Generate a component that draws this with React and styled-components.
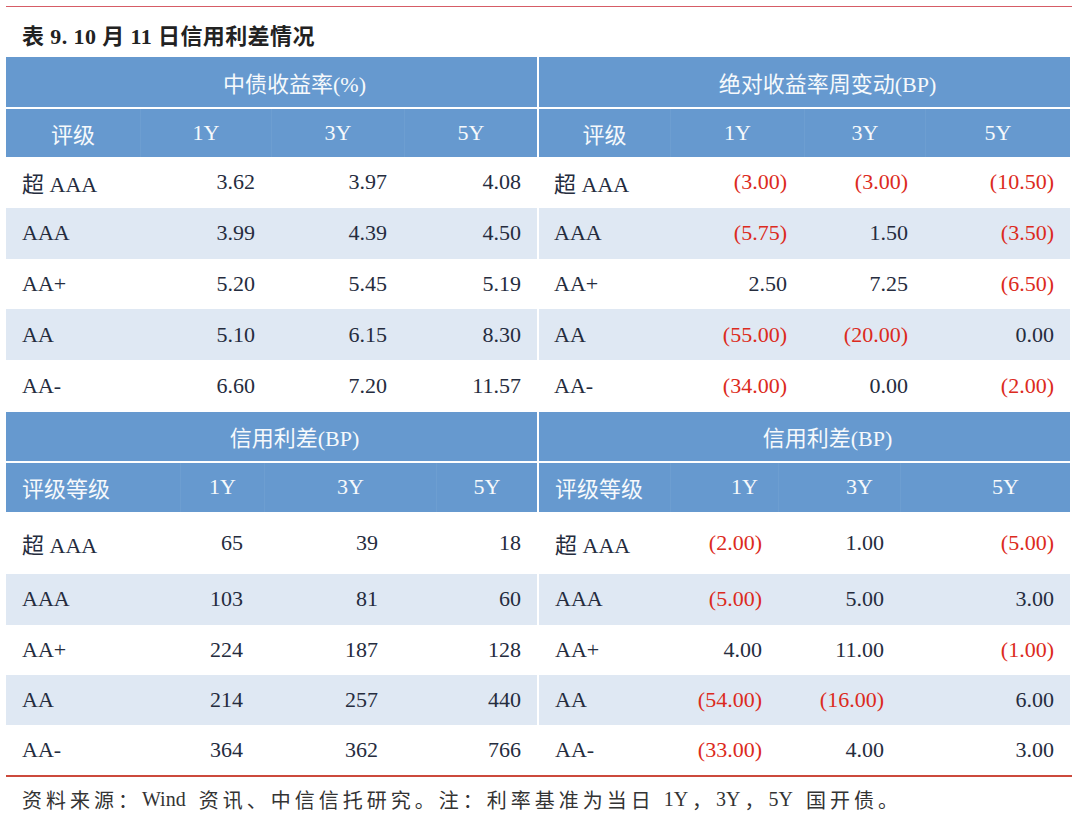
import React from 'react'
import styled, { createGlobalStyle } from 'styled-components'

const GlobalStyle = createGlobalStyle`
  body {
    margin: 0;
    background: #fff;
  }
`

const BLUE = '#6699cf'
const SHADE = '#dfe8f3'

// ===== table specs
const topLeft = {
  title: '中债收益率(%)',
  cols: [134, 131, 133, 133],
  rows: '52px 48px repeat(5, 50.8px)',
  head: [
    { text: '评级', align: 'center' },
    { text: '1Y', align: 'center' },
    { text: '3Y', align: 'center' },
    { text: '5Y', align: 'center' },
  ],
  labelPad: 16,
  pads: [16, 17, 16],
  data: [
    ['超 AAA', '3.62', '3.97', '4.08'],
    ['AAA', '3.99', '4.39', '4.50'],
    ['AA+', '5.20', '5.45', '5.19'],
    ['AA', '5.10', '6.15', '8.30'],
    ['AA-', '6.60', '7.20', '11.57'],
  ],
}

const topRight = {
  title: '绝对收益率周变动(BP)',
  cols: [131, 134, 121, 145],
  rows: '52px 48px repeat(5, 50.8px)',
  head: [
    { text: '评级', align: 'center' },
    { text: '1Y', align: 'center' },
    { text: '3Y', align: 'center' },
    { text: '5Y', align: 'center' },
  ],
  labelPad: 15,
  pads: [17, 17, 16],
  data: [
    ['超 AAA', '(3.00)', '(3.00)', '(10.50)'],
    ['AAA', '(5.75)', '1.50', '(3.50)'],
    ['AA+', '2.50', '7.25', '(6.50)'],
    ['AA', '(55.00)', '(20.00)', '0.00'],
    ['AA-', '(34.00)', '0.00', '(2.00)'],
  ],
}

const bottomLeft = {
  title: '信用利差(BP)',
  cols: [174, 84, 172, 101],
  rows: '51px 49px 62px 51px 50px 50px 50px',
  head: [
    { text: '评级等级', align: 'left', pad: 16 },
    { text: '1Y', align: 'center' },
    { text: '3Y', align: 'center' },
    { text: '5Y', align: 'center' },
  ],
  labelPad: 16,
  pads: [21, 58, 16],
  data: [
    ['超 AAA', '65', '39', '18'],
    ['AAA', '103', '81', '60'],
    ['AA+', '224', '187', '128'],
    ['AA', '214', '257', '440'],
    ['AA-', '364', '362', '766'],
  ],
}

const bottomRight = {
  title: '信用利差(BP)',
  cols: [131, 108, 122, 170],
  rows: '51px 49px 62px 51px 50px 50px 50px',
  head: [
    { text: '评级等级', align: 'left', pad: 16 },
    { text: '1Y', align: 'right', pad: 20 },
    { text: '3Y', align: 'right', pad: 27 },
    { text: '5Y', align: 'right', pad: 51 },
  ],
  labelPad: 16,
  pads: [16, 16, 16],
  data: [
    ['超 AAA', '(2.00)', '1.00', '(5.00)'],
    ['AAA', '(5.00)', '5.00', '3.00'],
    ['AA+', '4.00', '11.00', '(1.00)'],
    ['AA', '(54.00)', '(16.00)', '6.00'],
    ['AA-', '(33.00)', '4.00', '3.00'],
  ],
}

const justify = { left: 'flex-start', center: 'center', right: 'flex-end' }

const TablePanel = ({ spec }) => {
  return (
    <Panel $cols={spec.cols.map((c) => `${c}px`).join(' ')} $rows={spec.rows}>
      <GroupHeader>{spec.title}</GroupHeader>
      {spec.head.map((h, i) => (
        <HeadCell
          key={i}
          $first={i === 0}
          $align={h.align}
          $pl={h.align === 'left' ? h.pad : 0}
          $pr={h.align === 'right' ? h.pad : 0}
        >
          {h.text}
        </HeadCell>
      ))}
      {spec.data.map((row, r) =>
        row.map((val, c) => (
          <Cell
            key={`${r}-${c}`}
            $shaded={r % 2 === 1}
            $align={c === 0 ? 'left' : 'right'}
            $pl={c === 0 ? spec.labelPad : 0}
            $pr={c === 0 ? 0 : spec.pads[c - 1]}
            $neg={val.startsWith('(')}
          >
            {val}
          </Cell>
        ))
      )}
    </Panel>
  )
}

const App = () => {
  return (
    <Wrapper>
      <GlobalStyle />
      <TopRule />
      <Caption>表 9. 10 月 11 日信用利差情况</Caption>
      <Section>
        <TablePanel spec={topLeft} />
        <TablePanel spec={topRight} />
      </Section>
      <Section $gap={1}>
        <TablePanel spec={bottomLeft} />
        <TablePanel spec={bottomRight} />
      </Section>
      <BottomRule />
      <Source>
        资料来源：<Latin>Wind</Latin> 资讯、中信信托研究。注：利率基准为当日 <Latin>1Y</Latin>，
        <Latin>3Y</Latin>，<Latin>5Y</Latin> 国开债。
      </Source>
    </Wrapper>
  )
}

const Wrapper = styled.div`
  width: 1080px;
  padding: 6px 0 0 6px;
  box-sizing: border-box;
  font-family: 'Liberation Serif', 'Noto Sans CJK SC', serif;
`

const TopRule = styled.div`
  width: 1066px;
  height: 1px;
  background: #d65c66;
`

const Caption = styled.div`
  height: 50px;
  box-sizing: border-box;
  padding: 4px 0 0 16px;
  display: flex;
  align-items: center;
  font-size: 22px;
  letter-spacing: 0.4px;
  font-weight: bold;
  color: #222;
`

const Section = styled.div`
  display: flex;
  gap: 2px;
  width: 1064px;
  margin-top: ${(p) => p.$gap || 0}px;
`

const Panel = styled.div`
  display: grid;
  grid-template-columns: ${(p) => p.$cols};
  grid-template-rows: ${(p) => p.$rows};
`

const GroupHeader = styled.div`
  grid-column: 1 / -1;
  background: ${BLUE};
  border-bottom: 2px solid #fff;
  display: flex;
  align-items: center;
  justify-content: center;
  padding-left: 46px;
  font-size: 22px;
  color: #f6f9fc;
`

const HeadCell = styled.div`
  background: ${BLUE};
  border-left: ${(p) => (p.$first ? 'none' : '1px solid rgba(255, 255, 255, 0.05)')};
  display: flex;
  align-items: center;
  justify-content: ${(p) => justify[p.$align]};
  padding-left: ${(p) => p.$pl}px;
  padding-right: ${(p) => p.$pr}px;
  font-size: 22px;
  color: #f6f9fc;
`

const Cell = styled.div`
  background: ${(p) => (p.$shaded ? SHADE : '#fff')};
  display: flex;
  align-items: center;
  justify-content: ${(p) => justify[p.$align]};
  padding-left: ${(p) => p.$pl}px;
  padding-right: ${(p) => p.$pr}px;
  font-size: 22px;
  color: ${(p) => (p.$neg ? '#dc2a20' : '#252c3e')};
  white-space: nowrap;
`

const BottomRule = styled.div`
  width: 1066px;
  height: 2px;
  background: #cc4a3c;
`

const Source = styled.div`
  height: 46px;
  display: flex;
  align-items: center;
  padding-left: 16px;
  font-size: 20px;
  letter-spacing: 4px;
  color: #333;
  white-space: pre;
`

const Latin = styled.span`
  letter-spacing: 0;
  margin-right: 4px;
`

export default App
